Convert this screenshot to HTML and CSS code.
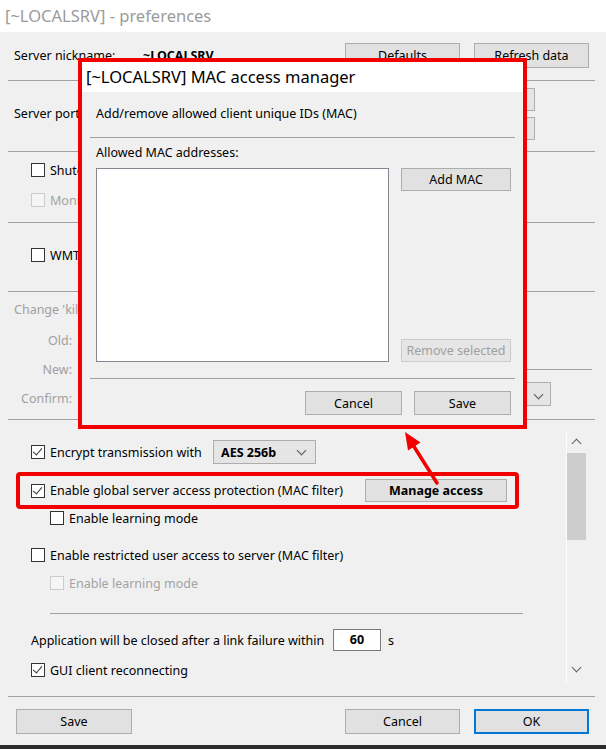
FILE: index.html
```html
<!DOCTYPE html>
<html>
    <head>
        <meta charset="UTF-8">
        <title>[~LOCALSRV] - preferences</title>
        <link rel="stylesheet" href="styles.css">
    </head>

    <body>
        <div class="window">
            <div class="titlebar">[~LOCALSRV] - preferences</div>

            <div class="content">
                <div class="section sec-nick">
                    <span class="nick-label">Server nickname:</span>
                    <span class="nick-value">~LOCALSRV</span>
                    <button class="btn btn-wide push">Defaults</button>
                    <button class="btn btn-wide">Refresh data</button>
                </div>

                <div class="section sec-port">
                    <span class="port-label">Server port:</span>
                    <div class="port-selects">
                        <div class="select select-small"></div>
                        <div class="select select-small"></div>
                    </div>
                </div>

                <div class="section sec-shut">
                    <label class="check-row"><span class="box"></span>Shutdown server when the last client disconnects</label>
                    <label class="check-row disabled"><span class="box"></span>Monitor client connections</label>
                </div>

                <div class="section sec-wmt">
                    <label class="check-row"><span class="box"></span>WMT service mode</label>
                </div>

                <div class="section sec-pass">
                    <div class="pass-left">
                        <div class="pass-title">Change 'kill' password</div>
                        <div class="pass-row"><span class="pass-label">Old:</span><span class="pass-input"></span></div>
                        <div class="pass-row"><span class="pass-label">New:</span><span class="pass-input"></span></div>
                        <div class="pass-row"><span class="pass-label">Confirm:</span><span class="pass-input"></span></div>
                    </div>
                    <div class="pass-right">
                        <div class="sub-line"></div>
                        <div class="select select-log"><span class="chev-down"></span></div>
                    </div>
                </div>

                <div class="section panel">
                    <div class="panel-body">
                        <div class="check-row row-encrypt">
                            <span class="box checked"></span>
                            <span class="encrypt-label">Encrypt transmission with</span>
                            <div class="select select-aes"><b>AES 256b</b><span class="chev-down"></span></div>
                        </div>

                        <div class="check-row row-mac">
                            <span class="box checked"></span>
                            <span>Enable global server access protection (MAC filter)</span>
                            <button class="btn btn-manage">Manage access</button>
                        </div>

                        <label class="check-row sub row-learn"><span class="box"></span>Enable learning mode</label>

                        <label class="check-row row-restricted"><span class="box"></span>Enable restricted user access to server (MAC filter)</label>

                        <label class="check-row sub row-learn2 disabled"><span class="box"></span>Enable learning mode</label>

                        <div class="panel-line"></div>

                        <div class="app-row">
                            <span class="app-label">Application will be closed after a link failure within</span>
                            <span class="num-input">60</span>
                            <span class="unit">s</span>
                        </div>

                        <label class="check-row row-gui"><span class="box checked"></span>GUI client reconnecting</label>
                    </div>

                    <div class="scrollbar">
                        <span class="chev-up"></span>
                        <div class="thumb"></div>
                        <span class="chev-down dark"></span>
                    </div>
                </div>

                <div class="footer">
                    <button class="btn btn-wide btn-save">Save</button>
                    <button class="btn btn-wide push">Cancel</button>
                    <button class="btn btn-wide btn-ok">OK</button>
                </div>
            </div>

            <!-- dialog over the preferences window -->
            <div class="dialog">
                <div class="dialog-title">[~LOCALSRV] MAC access manager</div>
                <div class="dialog-body">
                    <div class="dialog-desc">Add/remove allowed client unique IDs (MAC)</div>
                    <div class="dialog-line"></div>
                    <div class="dialog-label">Allowed MAC addresses:</div>
                    <div class="mac-area">
                        <div class="mac-list"></div>
                        <div class="mac-buttons">
                            <button class="btn btn-side">Add MAC</button>
                            <button class="btn btn-side" disabled>Remove selected</button>
                        </div>
                    </div>
                    <div class="dialog-line line-bottom"></div>
                    <div class="dialog-footer">
                        <button class="btn btn-dlg">Cancel</button>
                        <button class="btn btn-dlg">Save</button>
                    </div>
                </div>
            </div>

            <svg class="arrow" width="606" height="749" viewBox="0 0 606 749">
                <line x1="437" y1="483" x2="413" y2="445" stroke="#f20000" stroke-width="3.5" stroke-linecap="round"/>
                <polygon points="405,432 420.5,442.5 408,450.5" fill="#f20000"/>
            </svg>
        </div>
    </body>
</html>
```

FILE: styles.css
```css
* {
    margin: 0;
    padding: 0;
    box-sizing: border-box;
}

html, body {
    width: 100%;
    height: 100%;
}

body {
    font-family: "Noto Sans", sans-serif;
    font-size: 12.5px;
    color: #000;
    background-color: #f0f0f0;
}

.window {
    position: relative;
    width: 606px;
    height: 749px;
    background-color: #f0f0f0;
    border-bottom: 4px solid #2d2d2d;
    overflow: hidden;
}

.titlebar {
    height: 32px;
    line-height: 32px;
    padding-left: 5px;
    background-color: #fff;
    font-size: 16.5px;
    color: #9b9b9b;
}

.content {
    padding: 0 11px 0 8px;
}

.section {
    border-bottom: 1px solid #a0a0a0;
}

/* buttons */
.btn {
    font-family: inherit;
    font-size: 12.5px;
    color: #000;
    background-color: #e1e1e1;
    border: 1px solid #adadad;
    height: 24px;
}

.btn:disabled {
    color: #a0a0a0;
    background-color: #e6e6e6;
    border-color: #cccccc;
}

.btn-wide {
    width: 115px;
    height: 25px;
}

.push {
    margin-left: auto;
}

/* check boxes */
.check-row {
    display: flex;
    align-items: center;
    height: 18px;
    padding-left: 23px;
}

.box {
    width: 14px;
    height: 14px;
    border: 1px solid #333;
    background-color: #fff;
    margin-right: 5px;
    flex-shrink: 0;
    position: relative;
}

.box.checked::after {
    content: "";
    position: absolute;
    left: 3px;
    top: 0px;
    width: 4px;
    height: 8px;
    border-right: 1.5px solid #333;
    border-bottom: 1.5px solid #333;
    transform: rotate(40deg);
}

.disabled {
    color: #a3a3a3;
}

.disabled .box {
    border-color: #cccccc;
    background-color: #f5f5f5;
}

.sub {
    padding-left: 42px;
}

/* selects */
.select {
    background-color: #e5e5e5;
    border: 1px solid #adadad;
    height: 23px;
    display: flex;
    align-items: center;
    padding-left: 6px;
}

.chev-down, .chev-up {
    display: inline-block;
    width: 7px;
    height: 7px;
    border-right: 1.3px solid #555;
    border-bottom: 1.3px solid #555;
}

.chev-down {
    transform: rotate(45deg);
}

.chev-up {
    transform: rotate(-135deg);
}

/* section 1 */
.sec-nick {
    height: 49px;
    padding-top: 11px;
    display: flex;
    align-items: flex-start;
}

.nick-label {
    line-height: 25px;
    padding-left: 6px;
    width: 135px;
}

.nick-value {
    line-height: 25px;
    font-weight: bold;
}

.sec-nick .btn-wide + .btn-wide {
    margin-left: 14px;
    margin-right: 6px;
}

/* section 2 */
.sec-port {
    height: 71px;
    padding-top: 7px;
    display: flex;
    align-items: flex-start;
}

.port-label {
    padding-left: 6px;
    margin-top: 17px;
    line-height: 18px;
}

.port-selects {
    margin-left: auto;
    margin-right: 60px;
    display: flex;
    flex-direction: column;
    gap: 6px;
}

.select-small {
    width: 80px;
}

/* section 3 and 4 */
.sec-shut {
    height: 71px;
    padding-top: 9px;
    display: flex;
    flex-direction: column;
    gap: 12px;
}

.sec-wmt {
    height: 69px;
    padding-top: 23px;
}

/* section 5 */
.sec-pass {
    height: 128px;
    display: flex;
}

.pass-left {
    padding-top: 9px;
    width: 300px;
}

.pass-title {
    color: #a0a0a0;
    padding-left: 6px;
    line-height: 18px;
    height: 18px;
    margin-bottom: 10px;
}

.pass-row {
    display: flex;
    align-items: center;
    height: 22px;
    margin-bottom: 7px;
    color: #a0a0a0;
}

.pass-label {
    width: 64px;
    text-align: right;
}

.pass-input {
    margin-left: 8px;
    width: 200px;
    height: 22px;
    border: 1px solid #cccccc;
    background-color: #f0f0f0;
}

.pass-right {
    flex: 1;
    padding-top: 77px;
    padding-right: 3px;
    display: flex;
    flex-direction: column;
    align-items: flex-end;
}

.sub-line {
    width: 100%;
    border-top: 1px solid #a0a0a0;
}

.select-log {
    margin-top: 12px;
    margin-right: 41px;
    width: 120px;
    height: 24px;
    justify-content: flex-end;
    padding-right: 8px;
}

/* scroll panel */
.panel {
    height: 277px;
    display: flex;
}

.panel-body {
    flex: 1;
}

.row-encrypt {
    margin-top: 20px;
    height: 24px;
}

.encrypt-label {
    width: 163px;
}

.select-aes {
    width: 103px;
    height: 24px;
    justify-content: space-between;
    padding-right: 10px;
    padding-left: 7px;
    font-size: 12.5px;
}

.select-aes .chev-down {
    margin-top: -4px;
}

.row-mac {
    margin-top: 8px;
    margin-left: 8px;
    width: 503px;
    height: 37px;
    padding-left: 11px;
    border: 4px solid #f20000;
    border-radius: 4px;
}

.btn-manage {
    margin-left: auto;
    margin-right: 8px;
    width: 142px;
    height: 23px;
    font-weight: bold;
}

.row-restricted {
    margin-top: 16px;
    height: 24px;
}

.row-learn2 {
    margin-top: 7px;
}

.panel-line {
    margin-top: 21px;
    margin-left: 42px;
    width: 473px;
    border-top: 1px solid #a0a0a0;
}

.app-row {
    margin-top: 15px;
    height: 22px;
    padding-left: 23px;
    display: flex;
    align-items: center;
}

.app-label {
    width: 302px;
}

.num-input {
    width: 48px;
    height: 22px;
    border: 1px solid #7a7a7a;
    background-color: #fff;
    font-weight: bold;
    text-align: center;
    line-height: 20px;
}

.unit {
    margin-left: 7px;
}

.row-gui {
    margin-top: 10px;
}

.scrollbar {
    width: 20px;
    margin: 10px 9px 13px 0;
    border-left: 1px solid #fbfbfb;
    display: flex;
    flex-direction: column;
    align-items: center;
}

.scrollbar .chev-up {
    margin-top: 10px;
    border-color: #606060;
    border-width: 0 1.8px 1.8px 0;
}

.thumb {
    margin-top: 6px;
    width: 19px;
    height: 87px;
    background-color: #cdcdcd;
}

.scrollbar .chev-down {
    margin-top: auto;
    margin-bottom: 12px;
    border-color: #606060;
    border-width: 0 1.8px 1.8px 0;
}

/* footer */
.footer {
    height: 48px;
    padding-top: 12px;
    display: flex;
    align-items: flex-start;
}

.btn-save {
    width: 116px;
    margin-left: 8px;
}

.btn-ok {
    margin-left: 14px;
    margin-right: 6px;
    border: 2px solid #0078d7;
}

/* MAC access manager dialog */
.dialog {
    position: absolute;
    left: 78px;
    top: 58px;
    width: 449px;
    height: 371px;
    border: 4px solid #f20000;
    background-color: #f0f0f0;
}

.dialog-title {
    height: 30px;
    line-height: 30px;
    padding-left: 4px;
    background-color: #fff;
    font-size: 16.5px;
}

.dialog-body {
    padding: 0 8px;
}

.dialog-desc {
    margin-top: 12px;
    height: 20px;
    line-height: 20px;
    padding-left: 6px;
}

.dialog-line {
    margin-top: 13px;
    border-top: 1px solid #a0a0a0;
}

.dialog-label {
    margin-top: 7px;
    height: 16px;
    line-height: 16px;
    padding-left: 6px;
}

.mac-area {
    margin-top: 7px;
    height: 194px;
    padding-left: 6px;
    display: flex;
    gap: 12px;
}

.mac-list {
    width: 293px;
    height: 194px;
    background-color: #fff;
    border: 1px solid #828790;
}

.mac-buttons {
    width: 110px;
    display: flex;
    flex-direction: column;
    justify-content: space-between;
}

.btn-side {
    width: 110px;
    height: 23px;
}

.line-bottom {
    margin-top: 16px;
}

.dialog-footer {
    margin-top: 12px;
    padding-right: 4px;
    display: flex;
    justify-content: flex-end;
    gap: 12px;
}

.btn-dlg {
    width: 97px;
    height: 24px;
}

.arrow {
    position: absolute;
    left: 0;
    top: 0;
    pointer-events: none;
}
```
